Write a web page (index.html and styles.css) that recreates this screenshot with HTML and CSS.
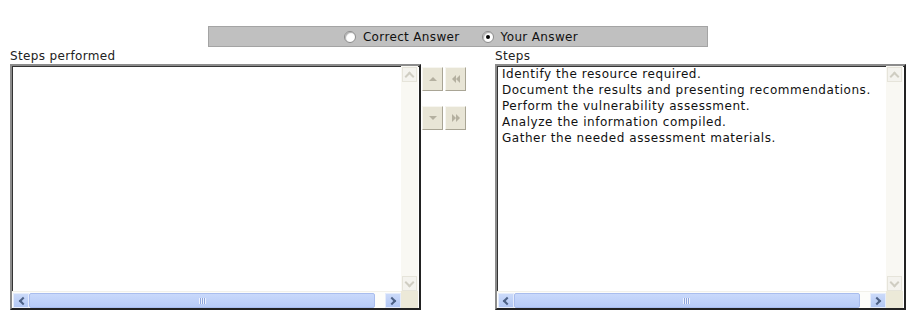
FILE: index.html
```html
<!DOCTYPE html>
<html lang="en">
<head>
    <meta charset="UTF-8">
    <title>Steps</title>
    <link rel="stylesheet" href="styles.css">
</head>
<body>
<div class="wrap">
    <div class="answer-bar">
        <span class="opt"><span class="radio"></span>Correct Answer</span>
        <span class="opt"><span class="radio checked"></span>Your Answer</span>
    </div>

    <div class="columns">
        <div class="col">
            <div class="caption">Steps performed</div>
            <div class="listbox">
                <div class="list-items"></div>
                <div class="vscroll">
                    <span class="vbtn"><span class="chev up"></span></span>
                    <span class="vtrack"></span>
                    <span class="vbtn"><span class="chev down"></span></span>
                </div>
                <div class="hscroll">
                    <span class="hbtn"><span class="hchev left"></span></span>
                    <span class="thumb"><span class="grip"></span></span>
                    <span class="htrack"></span>
                    <span class="hbtn"><span class="hchev right"></span></span>
                </div>
                <div class="corner"></div>
            </div>
        </div>

        <div class="movers">
            <div class="mover-row">
                <span class="mbtn"><span class="tri up"></span></span>
                <span class="mbtn"><span class="tri left"></span><span class="tri left"></span></span>
            </div>
            <div class="mover-row">
                <span class="mbtn"><span class="tri down"></span></span>
                <span class="mbtn"><span class="tri right"></span><span class="tri right"></span></span>
            </div>
        </div>

        <div class="col">
            <div class="caption">Steps</div>
            <div class="listbox">
                <div class="list-items">
                    <div>Identify the resource required.</div>
                    <div>Document the results and presenting recommendations.</div>
                    <div>Perform the vulnerability assessment.</div>
                    <div>Analyze the information compiled.</div>
                    <div>Gather the needed assessment materials.</div>
                </div>
                <div class="vscroll">
                    <span class="vbtn"><span class="chev up"></span></span>
                    <span class="vtrack"></span>
                    <span class="vbtn"><span class="chev down"></span></span>
                </div>
                <div class="hscroll">
                    <span class="hbtn"><span class="hchev left"></span></span>
                    <span class="thumb"><span class="grip"></span></span>
                    <span class="htrack"></span>
                    <span class="hbtn"><span class="hchev right"></span></span>
                </div>
                <div class="corner"></div>
            </div>
        </div>
    </div>
</div>
</body>
</html>
```

FILE: styles.css
```css
body {
    margin: 0;
    background: #ffffff;
    font-family: 'DejaVu Sans', Verdana, sans-serif;
    font-size: 12px;
    color: #000000;
}

.wrap {
    width: 896px;
    margin-left: 10px;
    padding-top: 26px;
}

/* top radio bar */
.answer-bar {
    width: 500px;
    height: 21px;
    margin: 0 auto;
    background: #c0c0c0;
    border: 1px solid #a4a4a4;
    box-sizing: border-box;
    display: flex;
    justify-content: center;
    align-items: center;
    gap: 22px;
    padding-left: 6px;
    letter-spacing: 0.35px;
}

.opt {
    display: flex;
    align-items: center;
    gap: 7px;
    color: #111;
}

.radio {
    width: 10px;
    height: 10px;
    border-radius: 50%;
    background: #ffffff;
    border: 1px solid #8a8a8a;
    box-shadow: inset 1px 1px 1px #b0b0b0;
    position: relative;
}

.radio.checked::after {
    content: "";
    position: absolute;
    left: 3px;
    top: 3px;
    width: 4px;
    height: 4px;
    border-radius: 50%;
    background: #000;
}

.columns {
    display: flex;
}

.col {
    width: 412px;
}

.caption {
    height: 16px;
    line-height: 16px;
    padding-top: 1px;
    color: #222;
    letter-spacing: 0.35px;
}

/* list box with xp style scrollbars */
.listbox {
    height: 242px;
    border-top: 2px solid #8c8c8c;
    border-left: 2px solid #8c8c8c;
    border-right: 2px solid #222;
    border-bottom: 2px solid #222;
    box-shadow: inset 1px 1px 0 #333;
    display: grid;
    grid-template-columns: 1fr 17px;
    grid-template-rows: 1fr 17px;
    background: #fff;
    padding-right: 1px;
}

.list-items {
    padding: 0 0 0 5px;
    line-height: 16px;
    overflow: hidden;
    white-space: nowrap;
    color: #111;
    letter-spacing: 0.55px;
}

.vscroll {
    display: flex;
    flex-direction: column;
    background: #f9f8f3;
    padding-top: 1px;
}

.vtrack {
    flex: 1;
}

.vbtn {
    height: 15px;
    width: 15px;
    margin-left: 1px;
    border: 1px solid #e6e4da;
    background: #f4f3ee;
    box-sizing: border-box;
    display: flex;
    align-items: center;
    justify-content: center;
}

.chev {
    width: 5px;
    height: 5px;
    border-left: 2px solid #cfcdc2;
    border-top: 2px solid #cfcdc2;
}

.chev.up {
    transform: rotate(45deg);
    margin-top: 3px;
}

.chev.down {
    transform: rotate(225deg);
    margin-top: -3px;
}

.hscroll {
    display: flex;
    background: #fdfdfa;
    border-top: 1px solid #f2f1ea;
    padding-left: 1px;
}

.hbtn {
    width: 16px;
    height: 15px;
    margin-top: 1px;
    background: linear-gradient(#cbdaf9, #b3c8f4);
    border: 1px solid #e5ecfb;
    box-sizing: border-box;
    display: flex;
    align-items: center;
    justify-content: center;
}

.hchev {
    width: 4px;
    height: 4px;
    border-left: 2px solid #4d6185;
    border-top: 2px solid #4d6185;
}

.hchev.left {
    transform: rotate(-45deg);
    margin-left: 3px;
}

.hchev.right {
    transform: rotate(135deg);
    margin-right: 3px;
}

.thumb {
    width: 346px;
    height: 15px;
    margin-top: 1px;
    background: linear-gradient(#c9d9fb, #b7cbf7);
    border: 1px solid #a9bdee;
    border-radius: 2px;
    box-sizing: border-box;
    display: flex;
    align-items: center;
    justify-content: center;
}

.grip {
    width: 7px;
    height: 6px;
    background: repeating-linear-gradient(90deg, #eef3fe 0 1px, #8fa6dc 1px 2px);
}

.htrack {
    flex: 1;
}

.corner {
    background: #ece9d8;
}

/* middle move buttons */
.movers {
    width: 73px;
    padding-top: 20px;
    padding-left: 1px;
    display: flex;
    flex-direction: column;
    gap: 15px;
}

.mover-row {
    display: flex;
    gap: 2px;
}

.mbtn {
    width: 21px;
    height: 24px;
    background: #e8e5d6;
    border-top: 1px solid #f7f6f0;
    border-left: 1px solid #f7f6f0;
    border-right: 1px solid #a9a595;
    border-bottom: 1px solid #a9a595;
    box-sizing: border-box;
    display: flex;
    align-items: center;
    justify-content: center;
}

.tri {
    width: 0;
    height: 0;
}

.tri.up {
    border-left: 4px solid transparent;
    border-right: 4px solid transparent;
    border-bottom: 4px solid #b4b0a0;
}

.tri.down {
    border-left: 4px solid transparent;
    border-right: 4px solid transparent;
    border-top: 4px solid #b4b0a0;
}

.tri.left {
    border-top: 4px solid transparent;
    border-bottom: 4px solid transparent;
    border-right: 4px solid #b4b0a0;
}

.tri.right {
    border-top: 4px solid transparent;
    border-bottom: 4px solid transparent;
    border-left: 4px solid #b4b0a0;
}
```
